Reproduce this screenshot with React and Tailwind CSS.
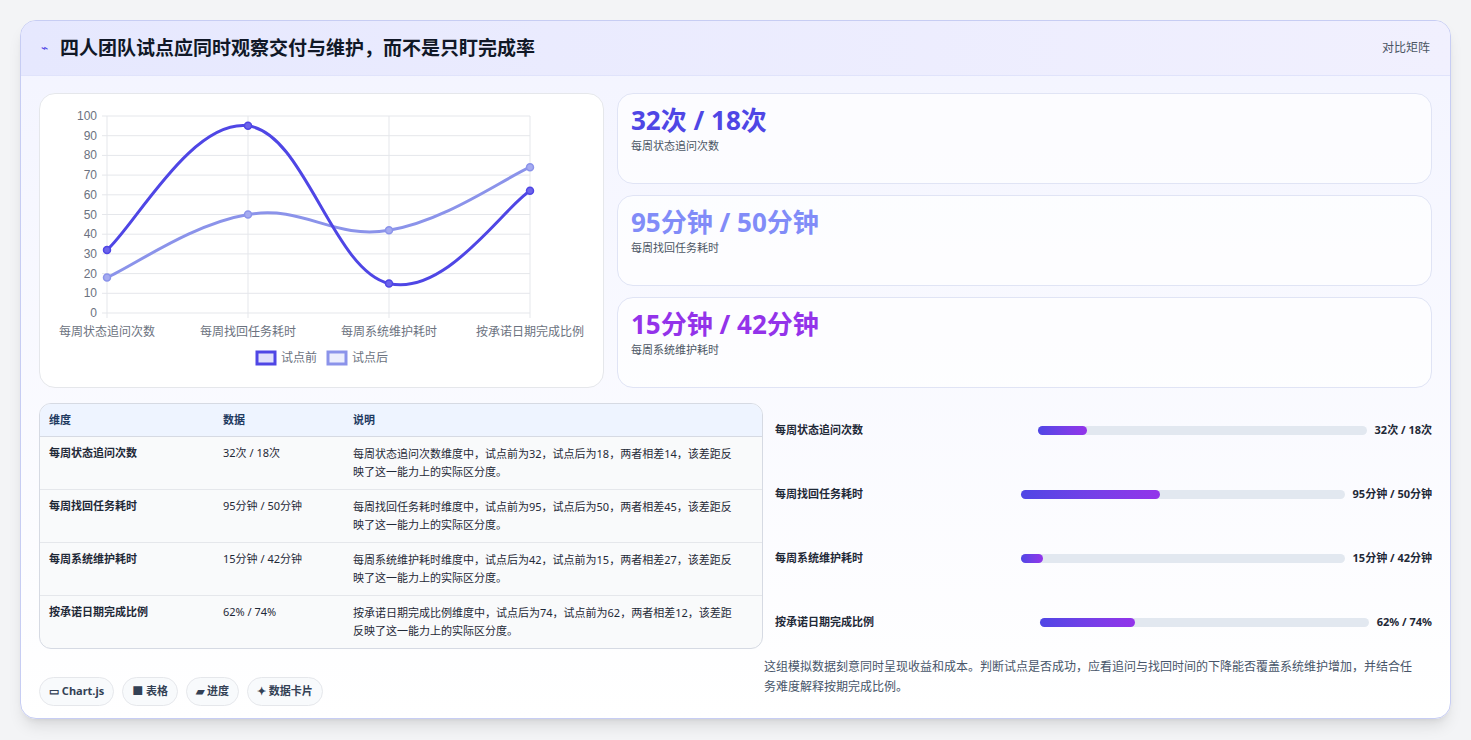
import React from 'react';

const F = { fontFamily: '"Noto Sans", "Noto Sans CJK SC", sans-serif' };
const cats = ['每周状态追问次数', '每周找回任务耗时', '每周系统维护耗时', '按承诺日期完成比例'];
const before = [32, 95, 15, 62];
const after = [18, 50, 42, 74];
const X0 = 67, X1 = 490, Y0 = 219, YH = 197;
const px = (i) => X0 + (i * (X1 - X0)) / 3;
const py = (v) => Y0 - (v / 100) * YH;

function curve(vals) {
  const pts = vals.map((v, i) => [px(i), py(v)]);
  let d = `M${pts[0][0]},${pts[0][1]}`;
  const t = 0.4;
  for (let i = 0; i < pts.length - 1; i++) {
    const p0 = pts[i - 1] || pts[i], p1 = pts[i], p2 = pts[i + 1], p3 = pts[i + 2] || p2;
    const c1 = [p1[0] + (p2[0] - p0[0]) * t / 2, p1[1] + (p2[1] - p0[1]) * t / 2];
    const c2 = [p2[0] - (p3[0] - p1[0]) * t / 2, p2[1] - (p3[1] - p1[1]) * t / 2];
    d += ` C${c1[0]},${c1[1]} ${c2[0]},${c2[1]} ${p2[0]},${p2[1]}`;
  }
  return d;
}

function Chart() {
  return (
    <svg width="564" height="294" style={{ fontFamily: '"Liberation Sans", "Noto Sans CJK SC", sans-serif' }}>
      {Array.from({ length: 11 }, (_, k) => (
        <g key={k}>
          <line x1={X0 - 5} x2={X1} y1={py(k * 10)} y2={py(k * 10)} stroke="#e5e7eb" />
          <text x={X0 - 10} y={py(k * 10) + 4} textAnchor="end" fontSize="12" fill="#6b7280">{k * 10}</text>
        </g>
      ))}
      {[0, 1, 2, 3].map((i) => (
        <g key={i}>
          <line x1={px(i)} x2={px(i)} y1={py(100)} y2={Y0 + 5} stroke="#e5e7eb" />
          <text x={px(i)} y={242} textAnchor="middle" fontSize="12" fill="#6b7280">{cats[i]}</text>
        </g>
      ))}
      <path d={curve(after)} fill="none" stroke="#8b93ea" strokeWidth="3" />
      <path d={curve(before)} fill="none" stroke="#4f46e5" strokeWidth="3" />
      {after.map((v, i) => <circle key={'a' + i} cx={px(i)} cy={py(v)} r="3.5" fill="#a5abf0" stroke="#8b93ea" strokeWidth="1.5" />)}
      {before.map((v, i) => <circle key={'b' + i} cx={px(i)} cy={py(v)} r="3.5" fill="#6d64ea" stroke="#4f46e5" strokeWidth="1.5" />)}
      <rect x="217" y="258" width="18" height="12" fill="#e0dffb" stroke="#4f46e5" strokeWidth="3" />
      <text x="241" y="268" fontSize="12" fill="#6b7280">试点前</text>
      <rect x="288" y="258" width="18" height="12" fill="#eceefd" stroke="#8b93ea" strokeWidth="3" />
      <text x="312" y="268" fontSize="12" fill="#6b7280">试点后</text>
    </svg>
  );
}

const stats = [
  ['32次 / 18次', '每周状态追问次数', 'text-[#4f46e5]'],
  ['95分钟 / 50分钟', '每周找回任务耗时', 'text-[#818cf8]'],
  ['15分钟 / 42分钟', '每周系统维护耗时', 'text-[#9333ea]'],
];

const rows = [
  ['每周状态追问次数', '32次 / 18次', '每周状态追问次数维度中，试点前为32，试点后为18，两者相差14，该差距反映了这一能力上的实际区分度。'],
  ['每周找回任务耗时', '95分钟 / 50分钟', '每周找回任务耗时维度中，试点前为95，试点后为50，两者相差45，该差距反映了这一能力上的实际区分度。'],
  ['每周系统维护耗时', '15分钟 / 42分钟', '每周系统维护耗时维度中，试点后为42，试点前为15，两者相差27，该差距反映了这一能力上的实际区分度。'],
  ['按承诺日期完成比例', '62% / 74%', '按承诺日期完成比例维度中，试点后为74，试点前为62，两者相差12，该差距反映了这一能力上的实际区分度。'],
];

const bars = [
  ['每周状态追问次数', '32次 / 18次', 'w-[329px]', 'w-[15%]'],
  ['每周找回任务耗时', '95分钟 / 50分钟', 'w-[324px]', 'w-[43%]'],
  ['每周系统维护耗时', '15分钟 / 42分钟', 'w-[324px]', 'w-[7%]'],
  ['按承诺日期完成比例', '62% / 74%', 'w-[329px]', 'w-[29%]'],
];

export default function App() {
  return (
    <div className="min-h-screen bg-[#f3f4f6] p-5" style={F}>
      <div className="rounded-2xl border border-[#c7cdf3] bg-gradient-to-b from-[#f3f4ff] to-white overflow-hidden shadow-lg h-[699px] flex flex-col">
        <div className="h-[55px] flex items-center justify-between px-5 bg-gradient-to-r from-[#e6e8fe] to-[#f1f0fe] border-b border-[#e0e3fb]">
          <div className="flex items-center gap-3">
            <span className="text-[#4f46e5] text-xs">⌁</span>
            <h1 className="text-[19px] font-bold text-[#111827]">四人团队试点应同时观察交付与维护，而不是只盯完成率</h1>
          </div>
          <span className="text-xs text-[#4b5563]">对比矩阵</span>
        </div>
        <div className="flex-1 px-[18px] pt-[17px] flex flex-col">
          <div className="flex gap-[13px]">
            <div className="w-[565px] h-[295px] rounded-2xl border border-[#e5e7eb] bg-white"><Chart /></div>
            <div className="flex-1 flex flex-col gap-[11px]">
              {stats.map(([v, l, c]) => (
                <div key={l} className="h-[91px] rounded-2xl border border-[#e0e4f5] bg-white/70 px-[13px] pt-2">
                  <div className={`text-[26px] font-bold leading-[36px] ${c}`}>{v}</div>
                  <div className="text-[11px] text-[#4b5563]">{l}</div>
                </div>
              ))}
            </div>
          </div>
          <div className="flex gap-[12px] mt-[15px]">
            <div className="w-[724px] rounded-xl border border-[#d6dae3] overflow-hidden bg-[#f9fafb] h-[246px]">
              <div className="flex h-[33px] items-center bg-[#eef4ff] border-b border-[#d6dae3] text-[11px] font-bold text-[#1e3a5f]">
                <div className="w-[174px] pl-[9px]">维度</div><div className="w-[130px] pl-[9px]">数据</div><div className="flex-1 pl-[9px]">说明</div>
              </div>
              {rows.map(([a, b, c], i) => (
                <div key={a} className={`flex h-[53px] pt-2 text-[11px] text-[#1f2937] ${i < 3 ? 'border-b border-[#e5e7eb]' : ''}`}>
                  <div className="w-[174px] pl-[9px] font-semibold">{a}</div>
                  <div className="w-[130px] pl-[9px]">{b}</div>
                  <div className="flex-1 pl-[9px] pr-5 leading-[18px]">{c}</div>
                </div>
              ))}
            </div>
            <div className="flex-1 flex flex-col -mt-[5px]">
              {bars.map(([l, v, tw, fw]) => (
                <div key={l} className="h-[64px] flex items-center gap-2 text-[11px] font-semibold text-[#1f2937]">
                  <div className="flex-1">{l}</div>
                  <div className={`${tw} h-[9px] rounded-full bg-[#e2e8f0]`}>
                    <div className={`${fw} h-full rounded-full bg-gradient-to-r from-[#4f46e5] to-[#9333ea]`} />
                  </div>
                  <div className="font-bold">{v}</div>
                </div>
              ))}
            </div>
          </div>
          <div className="flex justify-between">
            <div className="flex gap-2 pt-[23px]">
              {['▭ Chart.js', '■ 表格', '▰ 进度', '✦ 数据卡片'].map((t) => (
                <span key={t} className="h-[29px] px-[9px] flex items-center rounded-full border border-[#e5e7eb] bg-[#f8fafc] text-[11px] font-bold text-[#334155]">{t}</span>
              ))}
            </div>
            <p className="w-[668px] text-xs text-[#475569] leading-[20px] pr-[14px] mt-[3px]">这组模拟数据刻意同时呈现收益和成本。判断试点是否成功，应看追问与找回时间的下降能否覆盖系统维护增加，并结合任务难度解释按期完成比例。</p>
          </div>
        </div>
      </div>
    </div>
  );
}
